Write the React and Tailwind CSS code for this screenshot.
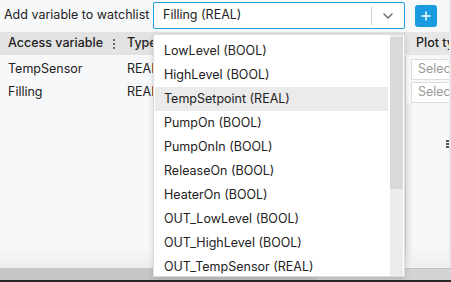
import { ChevronDown, Plus } from 'lucide-react';

const options = [
  'LowLevel (BOOL)',
  'HighLevel (BOOL)',
  'TempSetpoint (REAL)',
  'PumpOn (BOOL)',
  'PumpOnIn (BOOL)',
  'ReleaseOn (BOOL)',
  'HeaterOn (BOOL)',
  'OUT_LowLevel (BOOL)',
  'OUT_HighLevel (BOOL)',
  'OUT_TempSensor (REAL)',
];

const rows = [
  { name: 'TempSensor', type: 'REAL' },
  { name: 'Filling', type: 'REAL' },
];

function Kebab() {
  return (
    <span className="flex flex-col gap-[2px] px-[3px]">
      <span className="w-[2px] h-[2px] bg-[#444] rounded-full" />
      <span className="w-[2px] h-[2px] bg-[#444] rounded-full" />
      <span className="w-[2px] h-[2px] bg-[#444] rounded-full" />
    </span>
  );
}

export default function App() {
  return (
    <div
      className="relative w-[451px] h-[282px] overflow-hidden bg-[#f7f8fa] text-[#222]"
      style={{ fontFamily: 'Inter, "Noto Sans", sans-serif' }}
    >
      {/* ── Watchlist toolbar ── */}
      <div className="flex items-center h-[31px] pl-[4px]">
        <span className="text-[12.5px] w-[149px] shrink-0 whitespace-nowrap">Add variable to watchlist</span>
        <div className="flex items-center w-[252px] h-[27px] bg-white border border-[#1a9fe0] rounded-[2px]">
          <span className="flex-1 pl-[9px] text-[12.5px]">Filling (REAL)</span>
          <span className="w-px h-[18px] bg-[#d0d0d0]" />
          <span className="w-[32px] flex justify-center text-[#666]">
            <ChevronDown size={16} strokeWidth={2} />
          </span>
        </div>
        <button className="ml-[10px] w-[22px] h-[22px] rounded-[3px] bg-[#1a9be0] text-white flex items-center justify-center">
          <Plus size={14} strokeWidth={2.5} />
        </button>
      </div>

      {/* ── Table ── */}
      <div className="mt-[1px] w-[449px] overflow-hidden">
        <div className="flex h-[23px] bg-[#e3e3e3] text-[12.5px] font-medium whitespace-nowrap">
          <div className="w-[120px] shrink-0 flex items-center pl-[8px] justify-between pr-[2px]">
            <span>Access variable</span>
            <Kebab />
          </div>
          <div className="w-[285px] shrink-0 flex items-center pl-[7px] border-r border-[#cfcfcf]">Type</div>
          <div className="w-[100px] shrink-0 flex items-center pl-[11px] bg-[#e6e6e6]">Plot type</div>
        </div>
        {rows.map((r, i) => (
          <div key={r.name} className={`flex h-[23px] text-[12.5px] whitespace-nowrap ${i === 0 ? 'mt-[3px]' : ''}`}>
            <div className="w-[120px] shrink-0 flex items-center pl-[8px]">{r.name}</div>
            <div className="w-[285px] shrink-0 flex items-center pl-[7px]">{r.type}</div>
            <div className="w-[100px] shrink-0 flex items-center pl-[6px]">
              <div className="w-full h-[21px] bg-white border border-[#ddd] flex items-center pl-[6px] text-[#999]">
                Select
              </div>
            </div>
          </div>
        ))}
      </div>

      {/* shadow cast to the right column */}
      <div className="absolute left-[405px] top-[103px] w-[10px] h-[165px] bg-gradient-to-r from-[#e4e6e8] to-transparent" />
      <div className="absolute left-[405px] top-[56px] w-px h-[212px] bg-[#d6d6d6]" />

      {/* column resize handle */}
      <div className="absolute left-[446px] top-[140px] flex flex-col gap-[1px]">
        <span className="w-[3px] h-[2px] bg-[#555]" />
        <span className="w-[3px] h-[2px] bg-[#555]" />
        <span className="w-[3px] h-[2px] bg-[#555]" />
      </div>
      <div className="absolute right-0 top-0 w-[2px] h-[282px] bg-[#e8e8e8]" />

      {/* bottom fade + horizontal scrollbar */}
      <div className="absolute left-0 top-[248px] w-[449px] h-[20px] bg-gradient-to-b from-transparent to-[#eceef0]" />
      <div className="absolute left-0 top-[268px] w-[451px] h-[12px] flex bg-[#d4d4d4] border-t border-[#c4c4c4]">
        <div className="w-[317px] h-full bg-[#c6c6c6]" />
      </div>
      <div className="absolute left-0 top-[280px] w-[451px] h-[2px] bg-[#2a2a2a]" />

      {/* ── Dropdown menu ── */}
      <div className="absolute left-[153px] top-[34px] w-[252px] h-[243px] bg-white border border-[#dcdcdc] shadow-[0_2px_6px_rgba(0,0,0,0.15)] flex">
        <div className="flex-1 pt-[4px] pl-[1px]">
          {options.map((o) => (
            <div
              key={o}
              className={`h-[24px] flex items-center pl-[9px] text-[12.5px] ${
                o === 'TempSetpoint (REAL)' ? 'bg-[#ebebeb]' : ''
              }`}
            >
              {o}
            </div>
          ))}
        </div>
        <div className="w-[13px] ml-[2px] mr-[1px] bg-[#ececec] flex flex-col">
          <div className="h-[152px] mt-[2px] bg-[#d9d9d9]" />
        </div>
      </div>
    </div>
  );
}
